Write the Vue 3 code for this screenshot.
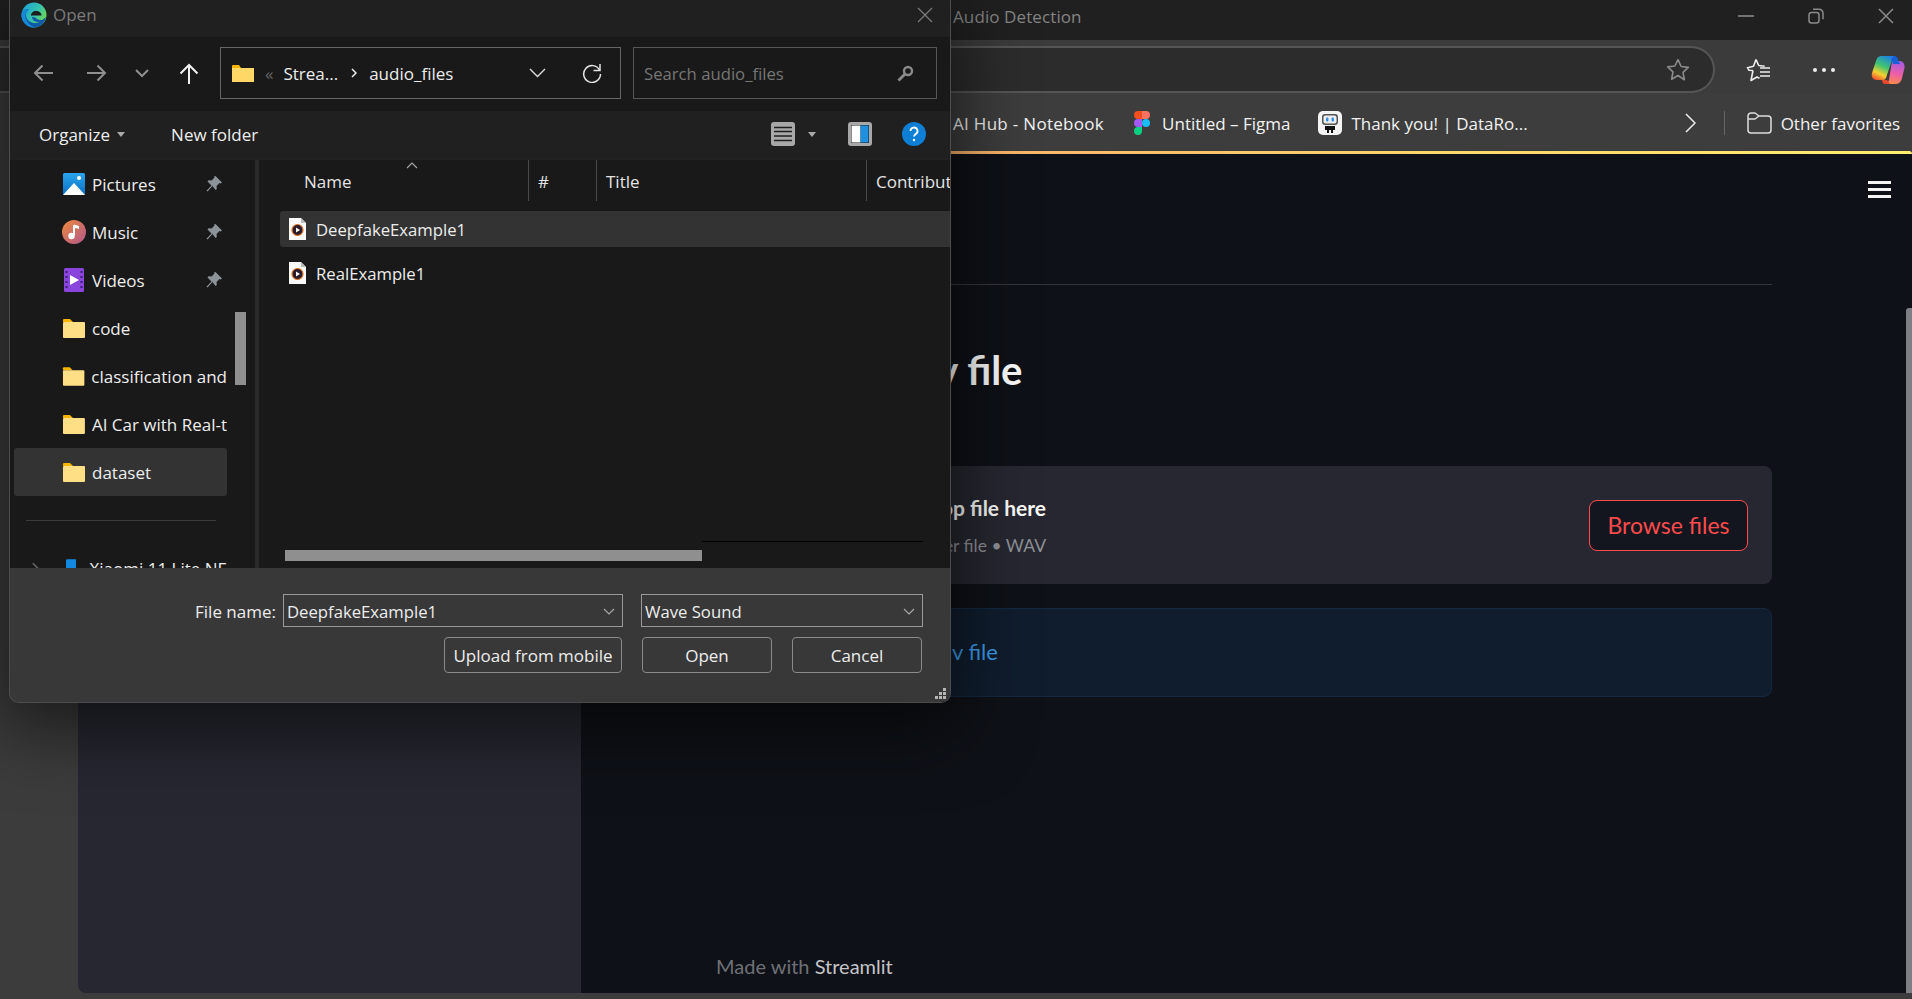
<script setup>
// folders in the dialog's navigation pane
const folders = ["code", "classification and", "AI Car with Real-t", "dataset"];
const pinned = ["Pictures", "Music", "Videos"];
const files = ["DeepfakeExample1", "RealExample1"];
</script>

<template>
  <div class="browser">
    <div class="titlebar">
      <span class="tab-title">Audio Detection</span>
      <div class="win-controls">
        <svg width="16" height="16" viewBox="0 0 16 16"><path d="M0 8h16" stroke="#8a8a8a" stroke-width="1.6" /></svg>
        <svg width="16" height="16" viewBox="0 0 16 16" fill="none" stroke="#8a8a8a" stroke-width="1.5"><rect x="1" y="4.5" width="10" height="10.5" rx="2.5" /><path d="M5 1.2h6a4 4 0 0 1 4 4v6" /></svg>
        <svg width="16" height="16" viewBox="0 0 16 16"><path d="M1 1l14 14M15 1L1 15" stroke="#8a8a8a" stroke-width="1.5" /></svg>
      </div>
    </div>

    <div class="toolbar">
      <div class="address">
        <svg class="star" width="26" height="26" viewBox="0 0 24 24" fill="none" stroke="#8a8a8a" stroke-width="1.5" stroke-linejoin="round"><path d="M12 2.5l2.9 6.3 6.6.8-4.9 4.6 1.3 6.8L12 17.1l-5.9 3.4 1.3-6.8-4.9-4.6 6.6-.8z" /></svg>
      </div>
      <svg class="fav" width="26" height="26" viewBox="0 0 26 26" fill="none" stroke="#eee" stroke-width="1.6" stroke-linejoin="round"><path d="M11 2.5l2.7 6 6 .7M8 13.5l-4-.2-1.5-2.6 6-1.5L11 2.5M8 13.5l-2 10 6-3.5 2.5 1.2" /><path d="M15 11h10M15 15h10M15 19h10" /></svg>
      <div class="dots"><i></i><i></i><i></i></div>
      <svg class="copilot" width="34" height="30" viewBox="0 0 34 30">
        <defs>
          <linearGradient id="cpa" x1="0.7" y1="0" x2="0.2" y2="1">
            <stop offset="0" stop-color="#1a7fe8" />
            <stop offset="0.45" stop-color="#3fc56f" />
            <stop offset="0.75" stop-color="#f4d02f" />
            <stop offset="1" stop-color="#f0522f" />
          </linearGradient>
          <linearGradient id="cpb" x1="0.6" y1="0" x2="0.4" y2="1">
            <stop offset="0" stop-color="#a45be0" />
            <stop offset="0.55" stop-color="#ef5fa6" />
            <stop offset="1" stop-color="#fb8a4c" />
          </linearGradient>
        </defs>
        <path d="M11 1h11c3 0 4 1 5 4L24 4c-2-.5-3 1-4 4l-5 15c-1 2-2 2-4 2H6c-4 0-6-3-5-7l4-12c1-4 3-5 6-5z" fill="url(#cpa)" />
        <path d="M21 6h8c3 0 5 3 4.500 7l-2.500 10c-1 5-4 6-7 6H13c2 0 4-1 5-4z" fill="url(#cpb)" />
        <path d="M23 1c2 0 3 .5 4 4l2 4h-7l-2-5z" fill="#1b5fd6" />
        <path d="M11 25h5l3 4h-5c-2 0-3-2-3-4z" fill="#e8472b" />
      </svg>
    </div>

    <div class="bookmarks">
      <span class="bm-text bm-first">AI Hub - Notebook</span>
      <svg class="figma" width="16" height="24" viewBox="0 0 16 24">
        <path d="M0 4a4 4 0 0 1 4-4h4v8H4a4 4 0 0 1-4-4z" fill="#f24e1e" />
        <path d="M8 0h4a4 4 0 0 1 0 8H8z" fill="#ff7262" />
        <path d="M0 12a4 4 0 0 1 4-4h4v8H4a4 4 0 0 1-4-4z" fill="#a259ff" />
        <circle cx="12" cy="12" r="4" fill="#1abcfe" />
        <path d="M0 20a4 4 0 0 1 4-4h4v4a4 4 0 0 1-8 0z" fill="#0acf83" />
      </svg>
      <span class="bm-text">Untitled – Figma</span>
      <svg class="robot" width="24" height="24" viewBox="0 0 24 24">
        <rect width="24" height="24" rx="5" fill="#f4f4f4" />
        <rect x="4" y="3" width="16" height="11" rx="3" fill="#555" />
        <rect x="5.500" y="4.500" width="13" height="8" rx="2" fill="#eee" />
        <rect x="8" y="6.500" width="2.500" height="4" rx="1" fill="#2f8fe8" />
        <rect x="13.500" y="6.500" width="2.500" height="4" rx="1" fill="#2f8fe8" />
        <path d="M7 15h10v4h-2v3h-2v-3h-2v3H9v-3H7z" fill="#111" />
      </svg>
      <span class="bm-text">Thank you! | DataRo...</span>
      <svg class="bm-more" width="11" height="20" viewBox="0 0 11 20"><path d="M1 1l9 9-9 9" fill="none" stroke="#eee" stroke-width="1.5" /></svg>
      <span class="bm-sep"></span>
      <svg class="bm-folder" width="25" height="22" viewBox="0 0 25 22" fill="none" stroke="#ddd" stroke-width="1.5" stroke-linejoin="round"><path d="M1 4a3 3 0 0 1 3-3h4l4 3h9a3 3 0 0 1 3 3v11a3 3 0 0 1-3 3H4a3 3 0 0 1-3-3z" /><path d="M1 7h7l4-3" /></svg>
      <span class="bm-text">Other favorites</span>
    </div>
    <div class="accent"></div>

    <div class="page">
      <aside class="st-sidebar"></aside>
      <main class="st-main">
        <div class="st-top">
          <div class="burger"><i></i><i></i><i></i></div>
        </div>
        <div class="st-body">
          <hr class="st-rule" />
          <h1 class="st-title">Upload a wav file</h1>
          <section class="uploader">
            <div class="up-text">
              <div class="up-head">Drag and drop file here</div>
              <div class="up-sub">Limit 200MB per file • WAV</div>
            </div>
            <button class="browse">Browse files</button>
          </section>
          <section class="info">Please upload a .wav file</section>
        </div>
        <footer class="st-foot">Made with <b>Streamlit</b></footer>
      </main>
      <div class="scrollthumb"></div>
    </div>

    <!-- file picker window on top of the browser -->
    <div class="dialog">
      <div class="dlg-title">
        <svg width="26" height="26" viewBox="0 0 26 26">
          <defs>
            <linearGradient id="edgeA" x1="0" y1="0" x2="1" y2="0.6">
              <stop offset="0" stop-color="#1ba1d8" />
              <stop offset="0.6" stop-color="#35c1b0" />
              <stop offset="1" stop-color="#6fd850" />
            </linearGradient>
          </defs>
          <circle cx="13" cy="13" r="12.500" fill="url(#edgeA)" />
          <path d="M25 15c-1 6-6 10.500-12 10.500C6 25.500.5 20 .5 13 .5 9 4 6.500 8 7.500 4.500 10 4 14 6.500 17.500c3 4 9 5 14 1 2-1.500 3.500-2.500 4.500-3.500z" fill="#0f5aa8" />
          <path d="M8 7.500c-3 2-4.500 5.500-3 9.500 1.500 4 5 7.500 9.500 8.400C7 26.500.5 20 .5 13 .5 9 4 6.500 8 7.500z" fill="#1689d8" />
          <path d="M10 14c0-3 2-5 5-5s5.500 1.500 5.500 4.500H13c-1.500 0-3 0-3 .5z" fill="#1d1d1d" />
          <path d="M11 15c0 3 3 5 6.500 5 2 0 4-1 5.500-2.500-3 1-6 .5-7.500-1-1-1-2.500-1.500-4.500-1.500z" fill="#0f5aa8" />
        </svg>
        <span class="dlg-name">Open</span>
        <svg class="dlg-close" width="16" height="16" viewBox="0 0 16 16"><path d="M1 1l14 14M15 1L1 15" stroke="#7a7a7a" stroke-width="1.300" /></svg>
      </div>

      <div class="dlg-nav">
        <svg class="back" width="20" height="18" viewBox="0 0 20 18" fill="none" stroke="#8f8f8f" stroke-width="2"><path d="M20 9H2M9.500 1.500L2 9l7.500 7.500" /></svg>
        <svg class="forward" width="20" height="18" viewBox="0 0 20 18" fill="none" stroke="#8f8f8f" stroke-width="2"><path d="M0 9h18M10.500 1.500L18 9l-7.500 7.500" /></svg>
        <svg class="recent" width="14" height="9" viewBox="0 0 14 9" fill="none" stroke="#8f8f8f" stroke-width="2"><path d="M1 1l6 6 6-6" /></svg>
        <svg class="up" width="20" height="21" viewBox="0 0 20 21" fill="none" stroke="#f0f0f0" stroke-width="2"><path d="M10 21V2M1.500 10.500L10 2l8.500 8.500" /></svg>
        <div class="addr">
          <svg width="22" height="18" viewBox="0 0 22 18"><path d="M0 2a1 1 0 0 1 1-1h6l2 3H0z" fill="#f4b400" /><rect y="4" width="22" height="14" fill="#ffd766" /></svg>
          <span class="crumb-dim">«</span>
          <span>Strea...</span>
          <svg class="crumb-sep" width="6" height="10" viewBox="0 0 6 10"><path d="M1 1l4 4-4 4" fill="none" stroke="#eee" stroke-width="1.500" /></svg>
          <span>audio_files</span>
          <svg class="addr-drop" width="17" height="10" viewBox="0 0 17 10"><path d="M1 1l7.500 7.500L16 1" fill="none" stroke="#ddd" stroke-width="1.400" /></svg>
          <svg class="addr-refresh" width="20" height="20" viewBox="0 0 20 20" fill="none" stroke="#e4e4e4" stroke-width="1.500"><path d="M17.500 7A8.400 8.400 0 1 0 18.500 11" /><path d="M18 1v6.500h-6.500" /></svg>
        </div>
        <div class="search">
          <span>Search audio_files</span>
          <svg width="17" height="17" viewBox="0 0 17 17" fill="none" stroke="#8a8a8a"><circle cx="11" cy="6" r="4" stroke-width="2.400" /><path d="M8 9l-6.500 6.500" stroke-width="2.800" /></svg>
        </div>
      </div>

      <div class="dlg-tools">
        <span class="tool organize">Organize</span>
        <span class="caret"></span>
        <span class="tool newfolder">New folder</span>
        <svg class="view-list" width="24" height="24" viewBox="0 0 24 24"><rect width="24" height="24" rx="3" fill="#a8a8a8" /><path d="M3 5.500h18M3 9.500h18M3 14h18M3 18.500h18" stroke="#1e1e1e" stroke-width="1.400" /></svg>
        <span class="caret view-caret"></span>
        <svg class="view-pane" width="24" height="24" viewBox="0 0 24 24"><rect width="24" height="24" rx="3" fill="#a8a8a8" /><rect x="3" y="3" width="18" height="18" fill="#1b1b1b" /><rect x="3.500" y="3.500" width="9" height="17" fill="#fff" /><rect x="12.500" y="3.500" width="8" height="17" fill="#1f8fe0" /></svg>
        <svg class="help" width="24" height="24" viewBox="0 0 24 24"><circle cx="12" cy="12" r="12" fill="#0f7fd6" /><path d="M8.500 9a3.500 3.500 0 1 1 5.200 3.100c-1.100.6-1.700 1.200-1.700 2.500" fill="none" stroke="#fff" stroke-width="1.800" /><circle cx="12" cy="18" r="1.200" fill="#fff" /></svg>
      </div>

      <div class="dlg-body">
        <nav class="tree">
          <div v-for="(name, i) in pinned" :key="name" class="tree-row">
            <svg v-if="i === 0" width="24" height="24" viewBox="0 0 24 24"><defs><linearGradient id="picA" x1="0" y1="0" x2="0" y2="1"><stop offset="0" stop-color="#2aa5ee" /><stop offset="1" stop-color="#0a6fc4" /></linearGradient></defs><rect x="1" y="1" width="22" height="22" rx="1.500" fill="url(#picA)" /><circle cx="17" cy="6" r="2" fill="#fff" /><path d="M1 23l11-12 11 12z" fill="#fff" /></svg>
            <svg v-else-if="i === 1" width="24" height="24" viewBox="0 0 24 24"><defs><linearGradient id="musA" x1="0" y1="0" x2="1" y2="1"><stop offset="0" stop-color="#f08a3c" /><stop offset="1" stop-color="#b0568e" /></linearGradient></defs><circle cx="12" cy="12" r="12" fill="url(#musA)" /><path d="M12 5v10" stroke="#fff" stroke-width="2" /><circle cx="9.500" cy="16" r="3.200" fill="#fff" /><path d="M12 4.500c2 .5 4 1 5 1.500v3c-2-.5-3.500-1-5-1.500z" fill="#fff" /></svg>
            <svg v-else width="24" height="24" viewBox="0 0 24 24"><rect x="2" width="20" height="24" rx="1.500" fill="#8a45dc" /><path d="M3.500 3h2v2h-2zM3.500 8h2v2h-2zM3.500 13h2v2h-2zM3.500 18h2v2h-2zM18.500 3h2v2h-2zM18.500 8h2v2h-2zM18.500 13h2v2h-2zM18.500 18h2v2h-2z" fill="#3c1f70" /><path d="M8 7l9 5-9 5z" fill="#fff" /></svg>
            <span class="tree-name">{{ name }}</span>
            <svg class="pin" width="16" height="16" viewBox="0 0 16 16"><path d="M9.500 0l6.500 6.500-1.500 1-1-.5-3 3 .3 3-1.300 1L6.500 10l-5 5.500-1-.8 5-5.200L1.500 5.500l1-1.300 3 .3 3-3-.5-1z" fill="#8d9499" /></svg>
          </div>
          <div v-for="name in folders" :key="name" class="tree-row" :class="{ selected: name === 'dataset' }">
            <svg width="24" height="20" viewBox="0 0 24 20"><path d="M1 2a1 1 0 0 1 1-1h6l3 3H1z" fill="#f4b400" /><rect x="1" y="4" width="22" height="16" rx="1" fill="#ffdf85" /></svg>
            <span class="tree-name">{{ name }}</span>
          </div>
          <div class="tree-rule"></div>
          <div class="tree-row device">
            <svg class="dev-arrow" width="9" height="14" viewBox="0 0 9 14"><path d="M1 1l6 6-6 6" fill="none" stroke="#666" stroke-width="2" /></svg>
            <svg class="dev-phone" width="13" height="22" viewBox="0 0 13 22"><rect width="13" height="22" rx="1.500" fill="#1389e2" /></svg>
            <span class="tree-name">Xiaomi 11 Lite NE</span>
          </div>
        </nav>
        <div class="tree-scroll"><div class="tree-thumb"></div></div>
        <div class="pane-split"></div>
        <div class="list">
          <svg class="sort" width="12" height="7" viewBox="0 0 12 7"><path d="M1 6l5-5 5 5" fill="none" stroke="#aaa" stroke-width="1.100" /></svg>
          <div class="list-head">
            <div class="col col-name">Name</div>
            <div class="col col-num">#</div>
            <div class="col col-title">Title</div>
            <div class="col col-contrib">Contribut</div>
          </div>
          <div class="rows">
            <div v-for="(file, i) in files" :key="file" class="file" :class="{ active: i === 0 }">
              <svg width="17" height="22" viewBox="0 0 17 22">
                <path d="M0 0h12l5 5v17H0z" fill="#fafafa" />
                <path d="M12 0v5h5" fill="#bbb" />
                <circle cx="8.500" cy="12" r="5.500" fill="#2a1a2a" stroke="#d8742a" stroke-width="1.200" />
                <path d="M7 9.500l4 2.500-4 2.500z" fill="#fff" />
              </svg>
              <span>{{ file }}</span>
            </div>
          </div>
          <div class="hscroll">
            <div class="hthumb"></div>
            <div class="htrack"></div>
          </div>
        </div>
      </div>

      <div class="dlg-foot">
        <div class="foot-row">
          <span class="fn-label">File name:</span>
          <div class="field fn-input">
            <span>DeepfakeExample1</span>
            <svg width="12" height="7" viewBox="0 0 12 7"><path d="M1 1l5 5 5-5" fill="none" stroke="#aaa" stroke-width="1.100" /></svg>
          </div>
          <div class="field fn-type">
            <span>Wave Sound</span>
            <svg width="12" height="7" viewBox="0 0 12 7"><path d="M1 1l5 5 5-5" fill="none" stroke="#aaa" stroke-width="1.100" /></svg>
          </div>
        </div>
        <div class="foot-row foot-actions">
          <button class="dlg-btn btn-mobile">Upload from mobile</button>
          <button class="dlg-btn">Open</button>
          <button class="dlg-btn">Cancel</button>
        </div>
        <svg class="grip" width="12" height="12" viewBox="0 0 12 12" fill="#b5b5b5"><path d="M9 0h3v3H9zM5 4h3v3H5zM9 4h3v3H9zM1 8h3v3H1zM5 8h3v3H5zM9 8h3v3H9z" /></svg>
      </div>
    </div>
  </div>
</template>

<style>
html,
body {
  margin: 0;
  background: #3c3c3c;
}
</style>

<style scoped>
.browser {
  position: relative;
  width: 1912px;
  height: 999px;
  overflow: hidden;
  display: flex;
  flex-direction: column;
  background: #3c3c3c;
  font-family: "Open Sans", "Liberation Sans", sans-serif;
}

.titlebar {
  height: 40px;
  flex: none;
  display: flex;
  align-items: center;
  justify-content: space-between;
  padding: 0 18px 8px 953px;
  box-sizing: border-box;
  background: #202020;
}

.tab-title {
  font-size: 17px;
  letter-spacing: 0.1px;
  color: #858585;
}

.win-controls {
  display: flex;
  align-items: center;
  gap: 54px;
}

.toolbar {
  height: 53px;
  flex: none;
  display: flex;
  align-items: center;
  background: #3b3b3b;
  padding-top: 6px;
  box-sizing: border-box;
}

.address {
  width: 1715px;
  height: 47px;
  flex: none;
  box-sizing: border-box;
  display: flex;
  align-items: center;
  justify-content: flex-end;
  padding-right: 22px;
  background: #2c2c2c;
  border: 2px solid #555;
  border-left: none;
  border-radius: 0 24px 24px 0;
}

.fav {
  margin-left: 30px;
}

.dots {
  display: flex;
  gap: 5px;
  margin-left: 42px;
}

.dots i {
  width: 4px;
  height: 4px;
  border-radius: 50%;
  background: #eee;
}

.copilot {
  margin-left: 36px;
}

.bookmarks {
  height: 58px;
  flex: none;
  display: flex;
  align-items: center;
  padding: 2px 0 0 953px;
  box-sizing: border-box;
  background: #3d3d3d;
}

.bm-text {
  font-size: 17px;
  color: #f2f2f2;
  white-space: nowrap;
}

.bm-first {
  letter-spacing: 0.3px;
}

.figma {
  margin: 0 12px 0 30px;
}

.robot {
  margin: 0 9px 0 28px;
}

.bm-more {
  margin-left: 157px;
}

.bm-sep {
  width: 1px;
  height: 24px;
  background: #666;
  margin-left: 28px;
}

.bm-folder {
  margin: 0 9px 0 22px;
}

.accent {
  height: 3px;
  flex: none;
  margin-left: 10px;
  background: linear-gradient(90deg, #f09a5e 0%, #fbb36a 50%, #ffd66e 75%, #ffee6e 100%);
  border-top-right-radius: 6px;
}

.page {
  position: relative;
  height: 839px;
  flex: none;
  display: flex;
  margin-left: 78px;
}

.st-sidebar {
  width: 503px;
  flex: none;
  background: #262730;
  border-bottom-left-radius: 8px;
}

.st-main {
  flex: 1;
  display: flex;
  flex-direction: column;
  background: #0e1117;
  color: #fafafa;
  font-family: Lato, "Open Sans", sans-serif;
}

.st-top {
  display: flex;
  justify-content: flex-end;
  padding: 27px 21px 0 0;
}

.burger {
  display: flex;
  flex-direction: column;
  gap: 4px;
}

.burger i {
  width: 23px;
  height: 3px;
  background: #f4f4f4;
}

.st-body {
  padding: 86px 140px 0;
  flex: 1;
}

.st-rule {
  margin: 0;
  border: none;
  border-top: 1px solid #34363d;
}

.st-title {
  margin: 60px 0 0 -2px;
  font-size: 40px;
  line-height: 50px;
  font-weight: 700;
}

.uploader {
  margin-top: 71px;
  height: 118px;
  box-sizing: border-box;
  display: flex;
  align-items: center;
  justify-content: space-between;
  padding: 0 24px 0 110px;
  background: #262730;
  border-radius: 8px;
}

.up-text {
  width: 215px;
  display: flex;
  flex-direction: column;
  align-items: flex-end;
  white-space: nowrap;
}

.up-head {
  font-size: 21px;
  font-weight: 700;
}

.up-sub {
  margin-top: 15px;
  font-size: 17.5px;
  color: #8f9096;
}

.browse {
  width: 159px;
  height: 51px;
  background: #13161f;
  border: 1px solid #ff4b4b;
  border-radius: 8px;
  color: #ff4b4b;
  font: 23px Lato, sans-serif;
}

.info {
  margin-top: 24px;
  height: 89px;
  box-sizing: border-box;
  display: flex;
  align-items: center;
  padding: 0 0 2px 42px;
  background: #101d2e;
  border: 1px solid #14283f;
  border-radius: 8px;
  color: #3c9be8;
  font-size: 22px;
}

.st-foot {
  padding: 0 0 15px 135px;
  font-size: 20px;
  color: #6f7076;
}

.st-foot b {
  font-weight: 400;
  color: #c4c4c8;
}

.scrollthumb {
  position: absolute;
  right: 0;
  top: 154px;
  bottom: 0;
  width: 6px;
  background: #7e7f85;
  border-top-left-radius: 3px;
}

.dialog {
  position: absolute;
  left: 9px;
  top: 0;
  width: 942px;
  height: 703px;
  box-sizing: border-box;
  display: flex;
  flex-direction: column;
  border: 1px solid #4c4c4c;
  border-top: none;
  border-radius: 0 0 10px 10px;
  overflow: hidden;
  box-shadow: 0 18px 70px 10px rgba(0, 0, 0, 0.55);
  color: #ededed;
  font-size: 17px;
}

.dlg-title {
  height: 37px;
  flex: none;
  display: flex;
  align-items: center;
  padding: 0 17px 8px 11px;
  box-sizing: border-box;
  background: #202020;
}

.dlg-name {
  margin-left: 6px;
  font-size: 17px;
  color: #7a7a7a;
  flex: 1;
}

.dlg-nav {
  height: 74px;
  flex: none;
  display: flex;
  align-items: center;
  box-sizing: border-box;
  padding-bottom: 2px;
  background: #191919;
}

.back {
  margin-left: 23px;
}

.forward {
  margin-left: 34px;
}

.recent {
  margin-left: 28px;
}

.up {
  margin-left: 30px;
}

.addr {
  margin-left: 21px;
  width: 401px;
  height: 52px;
  box-sizing: border-box;
  display: flex;
  align-items: center;
  padding-left: 11px;
  border: 1px solid #666;
}

.crumb-dim {
  margin: 0 10px 0 11px;
  color: #666;
}

.crumb-sep {
  margin: 0 12px 0 13px;
}

.addr-drop {
  margin-left: auto;
}

.addr-refresh {
  margin: 0 18px 0 36px;
}

.search {
  margin-left: 12px;
  width: 304px;
  height: 52px;
  box-sizing: border-box;
  display: flex;
  align-items: center;
  justify-content: space-between;
  padding: 0 22px 0 10px;
  border: 1px solid #555;
  color: #767676;
  font-size: 16.7px;
}

.dlg-tools {
  height: 48px;
  flex: none;
  display: flex;
  align-items: center;
  box-sizing: border-box;
  padding-bottom: 2px;
  background: #202020;
}

.tool {
  color: #eee;
}

.organize {
  margin-left: 29px;
}

.caret {
  width: 0;
  height: 0;
  border: 4px solid transparent;
  border-top: 5px solid #aaa;
  border-bottom: none;
  margin-left: 7px;
}

.newfolder {
  margin-left: 46px;
}

.view-list {
  margin-left: auto;
}

.view-caret {
  margin-left: 13px;
}

.view-pane {
  margin-left: 32px;
}

.help {
  margin: 0 24px 0 30px;
}

.dlg-body {
  height: 409px;
  flex: none;
  display: flex;
  overflow: hidden;
  background: #191919;
  border-top: 1px solid #222;
  box-sizing: border-box;
}

.tree {
  width: 217px;
  flex: none;
  overflow: hidden;
}

.tree-row {
  height: 48px;
  display: flex;
  align-items: center;
  padding-left: 48px;
  margin-left: 4px;
  border-radius: 3px;
  white-space: nowrap;
  overflow: hidden;
}

.tree-row.selected {
  background: #333;
}

.tree-name {
  margin-left: 6px;
  color: #eee;
}

.pin {
  margin-left: auto;
  margin-right: 5px;
}

.tree-rule {
  height: 1px;
  margin: 24px 11px 23px 16px;
  background: #3a3a3a;
}

.device {
  padding-left: 18px;
}

.dev-phone {
  margin-left: 27px;
}

.dev-phone + .tree-name {
  margin-left: 13px;
}

.tree-scroll {
  width: 11px;
  flex: none;
  margin-left: 8px;
  padding-top: 152px;
}

.tree-thumb {
  height: 73px;
  background: #8f8f8f;
}

.pane-split {
  width: 4px;
  flex: none;
  margin-left: 9px;
  background: #2a2a2a;
}

.list {
  position: relative;
  flex: 1;
  min-width: 0;
  display: flex;
  flex-direction: column;
  overflow: hidden;
}

.sort {
  position: absolute;
  left: 147px;
  top: 2px;
}

.list-head {
  height: 41px;
  flex: none;
  display: flex;
  color: #e4e4e4;
}

.col {
  flex: none;
  height: 100%;
  box-sizing: border-box;
  display: flex;
  align-items: center;
  padding-left: 9px;
  padding-top: 1px;
  border-left: 1px solid #4a4a4a;
}

.col-name {
  width: 269px;
  padding-left: 45px;
  border-left: none;
}

.col-num {
  width: 68px;
}

.col-title {
  width: 270px;
}

.col-contrib {
  width: 84px;
  overflow: hidden;
}

.rows {
  margin: 10px 0 0 21px;
  display: flex;
  flex-direction: column;
  gap: 8px;
  font-size: 16.7px;
}

.file {
  height: 36px;
  display: flex;
  align-items: center;
  gap: 10px;
  padding-left: 9px;
  border-radius: 3px 0 0 3px;
}

.file.active {
  background: #333;
}

.hscroll {
  margin: auto 0 7px 26px;
  height: 20px;
  display: flex;
  justify-content: flex-start;
  flex: none;
}

.hthumb {
  width: 417px;
  height: 11px;
  align-self: flex-end;
  background: #8f8f8f;
}

.htrack {
  width: 221px;
  height: 1px;
  background: #000;
}

.dlg-foot {
  position: relative;
  flex: 1;
  padding: 26px 27px 0 0;
  background: #383838;
}

.foot-row {
  display: flex;
  align-items: center;
  justify-content: flex-end;
}

.fn-label {
  margin-right: 7px;
  padding-top: 1px;
}

.field {
  height: 33px;
  box-sizing: border-box;
  display: flex;
  align-items: center;
  justify-content: space-between;
  padding: 1px 7px 0 3px;
  border: 1px solid #9a9a9a;
  font-size: 16.7px;
}

.fn-input {
  width: 340px;
}

.fn-type {
  width: 282px;
  margin-left: 18px;
}

.foot-actions {
  margin-top: 10px;
  gap: 20px;
  padding-right: 1px;
}

.dlg-btn {
  width: 130px;
  height: 36px;
  padding: 0;
  background: #383838;
  border: 1px solid #8a8a8a;
  border-radius: 4px;
  color: #ededed;
  font: 17px "Open Sans", sans-serif;
}

.btn-mobile {
  width: 178px;
}

.grip {
  position: absolute;
  right: 4px;
  bottom: 2px;
}
</style>
